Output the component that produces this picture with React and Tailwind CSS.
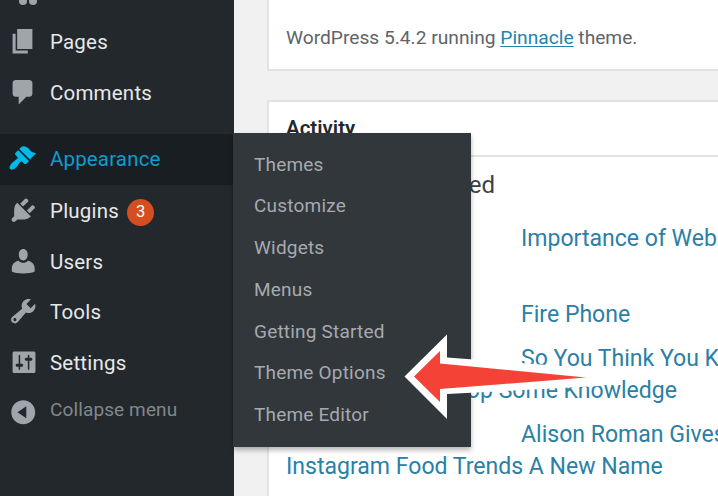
const icons = {
  pages: 'M6 15V2h10v13H6zm-1 1h8v2H3V5h2v11z',
  comments:
    'M5 2h9c1.1 0 2 .9 2 2v7c0 1.1-.9 2-2 2h-2l-5 5v-5H5c-1.1 0-2-.9-2-2V4c0-1.1.9-2 2-2z',
  appearance:
    'M14.48 11.06L7.41 3.99l1.5-1.5c.5-.56 2.3-.47 3.51.32 1.21.8 1.43 1.28 2 2.02.85 1.11 2.33 1.85 4.06 1.82l-3.5 3.5-.5.91zm-.71.71L6.7 4.7 4.93 6.47c-.39.39-.39 1.02 0 1.41l1.06 1.06c.39.39.39 1.03 0 1.42-.6.6-1.43 1.11-2.21 1.69-.35.26-.7.53-1.01.84C1.43 14.23.4 16.08 1.4 17.07c.99 1 2.84-.03 4.18-1.36.31-.31.58-.66.85-1.02.57-.78 1.08-1.61 1.69-2.21.39-.39 1.02-.39 1.41 0l1.06 1.06c.39.39 1.02.39 1.41 0z',
  plugins:
    'M13.11 4.36L9.87 7.6 8 5.73l3.24-3.24c.35-.34 1.05-.2 1.56.32.52.51.66 1.21.31 1.55zm-8 1.77l.91-1.12 9.01 9.01-1.19.84c-.71.71-2.63 1.16-3.82 1.16H6.14L4.9 17.26c-.59.59-1.54.59-2.12 0-.59-.58-.59-1.53 0-2.12l1.24-1.24v-3.88c0-1.13.4-3.19 1.09-3.89zm7.26 3.97l3.24-3.24c.34-.35 1.04-.21 1.55.31.52.51.66 1.21.31 1.55l-3.24 3.25z',
  users:
    'M10 9.5C8.2 9.5 7.1 7.7 7.1 5.6 7.1 3.5 8.3 2 10 2s2.9 1.5 2.9 3.6c0 2.1-1.1 3.9-2.9 3.9zM7 9.600c.7.9 1.700 1.400 3 1.400s2.300-.5 3-1.400c2.700.4 4.500 2.400 4.500 5v2.200c-1.8.9-4.500 1.300-7.500 1.300s-5.700-.4-7.500-1.300v-2.200c0-2.600 1.800-4.600 4.500-5z',
  tools:
    'M16.68 9.77c-1.34 1.34-3.3 1.67-4.95.99l-5.41 6.52c-.99.99-2.59.99-3.58 0s-.99-2.59 0-3.57l6.52-5.42c-.68-1.65-.35-3.61.99-4.95 1.28-1.28 3.12-1.62 4.72-1.06l-2.89 2.89 2.82 2.82 2.86-2.87c.53 1.58.18 3.39-1.08 4.65zM3.81 16.21c.4.39 1.04.39 1.43 0 .4-.4.4-1.04 0-1.43-.39-.4-1.03-.4-1.43 0-.39.39-.39 1.03 0 1.43z',
  settings:
    'M18 16V4c0-.55-.45-1-1-1H4c-.55 0-1 .45-1 1v12c0 .55.45 1 1 1h13c.55 0 1-.45 1-1zM8 11h1c.55 0 1 .45 1 1s-.45 1-1 1H8v1.5c0 .28-.22.5-.5.5s-.5-.22-.5-.5V13H6c-.55 0-1-.45-1-1s.45-1 1-1h1V5.5c0-.28.22-.5.5-.5s.5.22.5.5V11zm5-2h-1c-.55 0-1-.45-1-1s.45-1 1-1h1V5.5c0-.28.22-.5.5-.5s.5.22.5.5V7h1c.55 0 1 .45 1 1s-.45 1-1 1h-1v5.5c0 .28-.22.5-.5.5s-.5-.22-.5-.5V9z',
  collapse:
    'M10 2.16c4.33 0 7.84 3.51 7.84 7.84s-3.51 7.84-7.84 7.84S2.16 14.33 2.16 10 5.71 2.16 10 2.16zm2 11.72V6.12L6.18 9.97z',
};

function Icon({ name }) {
  return (
    <svg viewBox="0 0 20 20" className="ml-2 mr-[11.5px] size-[30.5px] shrink-0" fill="currentColor" fillRule="evenodd">
      <path d={icons[name]} />
    </svg>
  );
}

function MenuItem({ icon, label, badge, active }) {
  return (
    <li className={active ? 'flex h-[51px] items-center bg-[#191e23] pb-0.5 text-[#00b9eb]' : 'flex h-[50.6px] items-center text-[#a0a5aa]'}>
      <Icon name={icon} />
      <span className={active ? 'mt-0.5 text-[20.5px] tracking-[0.15px] text-[#0d9dce]' : 'mt-0.5 text-[20.5px] tracking-[0.2px] text-[#e6e8ea]'}>{label}</span>
      {badge && (
        <span className="ml-2 mt-1 flex size-[27px] items-center justify-center rounded-full bg-[#d54e21] text-[16.5px] text-white">
          {badge}
        </span>
      )}
    </li>
  );
}

const submenu = ['Themes', 'Customize', 'Widgets', 'Menus', 'Getting Started', 'Theme Options', 'Theme Editor'];

function Sidebar() {
  return (
    <nav className="w-[234px] shrink-0 bg-[#23282d]">
      <div className="h-4">
        <svg width="60" height="16" viewBox="0 0 60 16" fill="#a0a5aa">
          <ellipse cx="23" cy="1" rx="4" ry="4" />
          <ellipse cx="33" cy="1" rx="4" ry="4" />
        </svg>
      </div>
      <ul>
        <MenuItem icon="pages" label="Pages" />
        <MenuItem icon="comments" label="Comments" />
      </ul>
      <ul className="pt-[17px]">
        <MenuItem icon="appearance" label="Appearance" active />
        <MenuItem icon="plugins" label="Plugins" badge="3" />
        <MenuItem icon="users" label="Users" />
        <MenuItem icon="tools" label="Tools" />
        <MenuItem icon="settings" label="Settings" />
      </ul>
      <button className="flex h-[50px] items-center text-[#a0a5aa]">
        <Icon name="collapse" />
        <span className="mb-1 text-[19px] tracking-[0.12px] text-[#82878c]">Collapse menu</span>
      </button>
    </nav>
  );
}

function Content() {
  return (
    <main className="min-w-0 flex-1 overflow-hidden bg-[#f1f1f1] pl-[33px]">
      <section className="flex h-[71px] items-end border-b-2 border-l-2 border-[#e2e2e2] bg-white pb-[17px] pl-[17px]">
        <p className="whitespace-nowrap text-[19.2px] leading-7 text-[#606468]">
          WordPress 5.4.2 running <a className="text-[#2483aa] underline underline-offset-2">Pinnacle</a> theme.
        </p>
      </section>
      <section className="mt-[29px] h-[420px] border-l-2 border-t-2 border-[#e2e2e2] bg-white">
        <h2 className="flex h-[55px] items-center border-b-2 border-[#e2e2e2] pl-[17px] text-[20.5px] font-semibold text-[#23282d]">
          Activity
        </h2>
        <div className="whitespace-nowrap pl-[17px] text-[23.05px] leading-8 text-[#2a80a6]">
          <h3 className="mt-3 w-[209px] text-right text-[24px] text-[#3c4146]">Recently Published</h3>
          <p className="mt-[22px] pl-[235px]">Importance of Web Design</p>
          <p className="mt-11 pl-[235px]">Fire Phone</p>
          <p className="mt-3 pl-[235px]">So You Think You Know</p>
          <p className="w-[391px] text-right">Drop Some Knowledge</p>
          <p className="mt-3 pl-[235px]">Alison Roman Gives</p>
          <p>Instagram Food Trends A New Name</p>
        </div>
      </section>
    </main>
  );
}

export default function App() {
  return (
    <div className="relative flex h-[496px] w-[718px] overflow-hidden font-['Roboto',sans-serif]">
      <Sidebar />
      <Content />
      <ul className="absolute left-[233px] top-[133px] h-[314px] w-[237.5px] bg-[#32373c] pl-[21px] pt-[11px] shadow-[0_3px_5px_rgba(0,0,0,0.3)]">
        {submenu.map((label) => (
          <li key={label} className="flex h-[41.75px] items-center text-[19px] tracking-[0.2px] text-[#a5aaaf]">
            {label}
          </li>
        ))}
      </ul>
      <svg className="absolute left-[400px] top-[330px]" width="210" height="94" viewBox="400 330 210 94">
        <path d="M404.5 376.5L447 334.5V357.5L600 369V386L447 394V419Z" fill="#fff" />
        <path d="M414 376.5L440 351V363.5L586 377.5L440 389V402Z" fill="#f44336" />
      </svg>
    </div>
  );
}
